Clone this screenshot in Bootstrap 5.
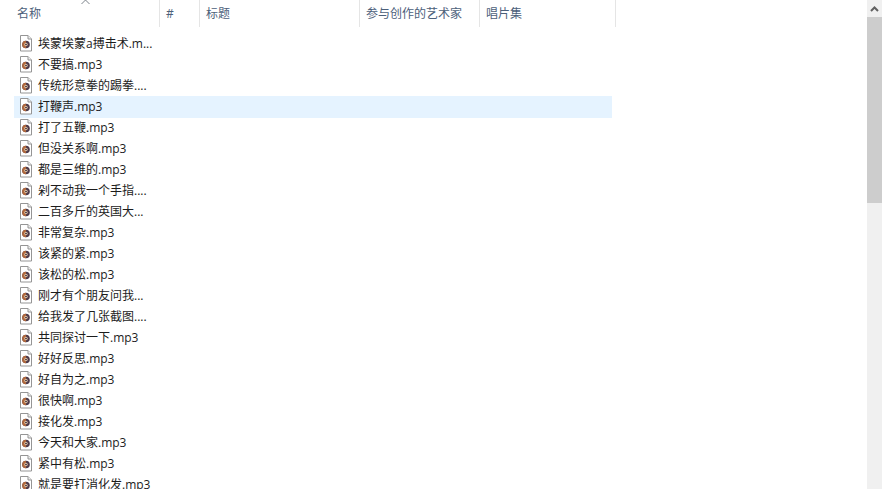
<!DOCTYPE html>
<html lang="zh">
<head>
<meta charset="utf-8">
<title>文件列表</title>
<link href="https://cdn.jsdelivr.net/npm/bootstrap@5.3.0/dist/css/bootstrap.min.css" rel="stylesheet">
<style>
html,body{height:100%;overflow:hidden;background:#fff;}
body{font-family:"Open Sans","Noto Sans CJK SC",sans-serif;font-size:12px;color:#1c1c1c;}
.shell{height:489px;}
.pane{width:867px;overflow:hidden;}
.headbar{height:27px;}
.hcol{border-right:1px solid #e5e5e5;color:#4c607a;padding-left:6px;padding-top:6px;line-height:16px;position:relative;}
.hc1{width:160px;padding-left:17px;}
.hc2{width:40px;}
.hc3{width:160px;}
.hc4{width:120px;}
.hc5{width:136px;}
.sorter{position:absolute;left:81px;top:-1px;}
.filelist{margin-top:6px;margin-left:14px;width:598px;}
.frow{height:21px;padding-left:6px;gap:4px;line-height:21px;white-space:nowrap;}
.frow.act{background:#e5f3ff;box-shadow:0 1px 0 #e5f3ff;}
.frow svg{flex:none;}
.sbar{width:15px;background:#f0f0f0;margin-right:1px;}
.sbtn{height:17px;background:#f0f0f0;}
.sthumb{height:186px;background:#cdcdcd;}
</style>
</head>
<body>
<div class="shell d-flex">
  <div class="pane">
    <div class="headbar d-flex">
      <div class="hcol hc1">名称
        <svg class="sorter" width="10" height="6" viewBox="0 0 10 6"><path d="M.5 5 4.500 1l4 4" fill="none" stroke="#7d838b"/></svg>
      </div>
      <div class="hcol hc2">#</div>
      <div class="hcol hc3">标题</div>
      <div class="hcol hc4">参与创作的艺术家</div>
      <div class="hcol hc5">唱片集</div>
    </div>
    <div class="filelist d-flex flex-column">
      <div class="frow d-flex align-items-center"><svg width="14" height="17"><use href="#mp3"/></svg><span>埃蒙埃蒙a搏击术.m...</span></div>
      <div class="frow d-flex align-items-center"><svg width="14" height="17"><use href="#mp3"/></svg><span>不要搞.mp3</span></div>
      <div class="frow d-flex align-items-center"><svg width="14" height="17"><use href="#mp3"/></svg><span>传统形意拳的踢拳....</span></div>
      <div class="frow act d-flex align-items-center"><svg width="14" height="17"><use href="#mp3"/></svg><span>打鞭声.mp3</span></div>
      <div class="frow d-flex align-items-center"><svg width="14" height="17"><use href="#mp3"/></svg><span>打了五鞭.mp3</span></div>
      <div class="frow d-flex align-items-center"><svg width="14" height="17"><use href="#mp3"/></svg><span>但没关系啊.mp3</span></div>
      <div class="frow d-flex align-items-center"><svg width="14" height="17"><use href="#mp3"/></svg><span>都是三维的.mp3</span></div>
      <div class="frow d-flex align-items-center"><svg width="14" height="17"><use href="#mp3"/></svg><span>剁不动我一个手指....</span></div>
      <div class="frow d-flex align-items-center"><svg width="14" height="17"><use href="#mp3"/></svg><span>二百多斤的英国大...</span></div>
      <div class="frow d-flex align-items-center"><svg width="14" height="17"><use href="#mp3"/></svg><span>非常复杂.mp3</span></div>
      <div class="frow d-flex align-items-center"><svg width="14" height="17"><use href="#mp3"/></svg><span>该紧的紧.mp3</span></div>
      <div class="frow d-flex align-items-center"><svg width="14" height="17"><use href="#mp3"/></svg><span>该松的松.mp3</span></div>
      <div class="frow d-flex align-items-center"><svg width="14" height="17"><use href="#mp3"/></svg><span>刚才有个朋友问我...</span></div>
      <div class="frow d-flex align-items-center"><svg width="14" height="17"><use href="#mp3"/></svg><span>给我发了几张截图....</span></div>
      <div class="frow d-flex align-items-center"><svg width="14" height="17"><use href="#mp3"/></svg><span>共同探讨一下.mp3</span></div>
      <div class="frow d-flex align-items-center"><svg width="14" height="17"><use href="#mp3"/></svg><span>好好反思.mp3</span></div>
      <div class="frow d-flex align-items-center"><svg width="14" height="17"><use href="#mp3"/></svg><span>好自为之.mp3</span></div>
      <div class="frow d-flex align-items-center"><svg width="14" height="17"><use href="#mp3"/></svg><span>很快啊.mp3</span></div>
      <div class="frow d-flex align-items-center"><svg width="14" height="17"><use href="#mp3"/></svg><span>接化发.mp3</span></div>
      <div class="frow d-flex align-items-center"><svg width="14" height="17"><use href="#mp3"/></svg><span>今天和大家.mp3</span></div>
      <div class="frow d-flex align-items-center"><svg width="14" height="17"><use href="#mp3"/></svg><span>紧中有松.mp3</span></div>
      <div class="frow d-flex align-items-center"><svg width="14" height="17"><use href="#mp3"/></svg><span>就是要打消化发.mp3</span></div>
    </div>
  </div>
  <div class="sbar d-flex flex-column">
    <div class="sbtn d-flex align-items-center justify-content-center">
      <svg width="9" height="6" viewBox="0 0 9 6"><path d="M1 5 4.500 1.500 8 5" fill="none" stroke="#606060" stroke-width="2"/></svg>
    </div>
    <div class="sthumb"></div>
  </div>
</div>
<svg width="0" height="0" class="d-none">
  <symbol id="mp3" viewBox="0 0 14 17">
    <path d="M.5.5h7.500l3.500 3.500v12h-11z" fill="#fff" stroke="#959595"/>
    <path d="M8 .5v3.500h3.500" fill="#efefef" stroke="#959595"/>
    <circle cx="6" cy="9.500" r="3.800" fill="#4d3a4a"/>
    <path d="M6 5.700a3.800 3.800 0 0 0 0 7.600z" fill="#b0683c"/>
    <circle cx="6" cy="9.500" r="1.700" fill="#e2c6a8"/>
    <circle cx="6" cy="9.500" r=".8" fill="#241b2a"/>
  </symbol>
</svg>
<script src="https://cdn.jsdelivr.net/npm/bootstrap@5.3.0/dist/js/bootstrap.bundle.min.js"></script>
</body>
</html>
